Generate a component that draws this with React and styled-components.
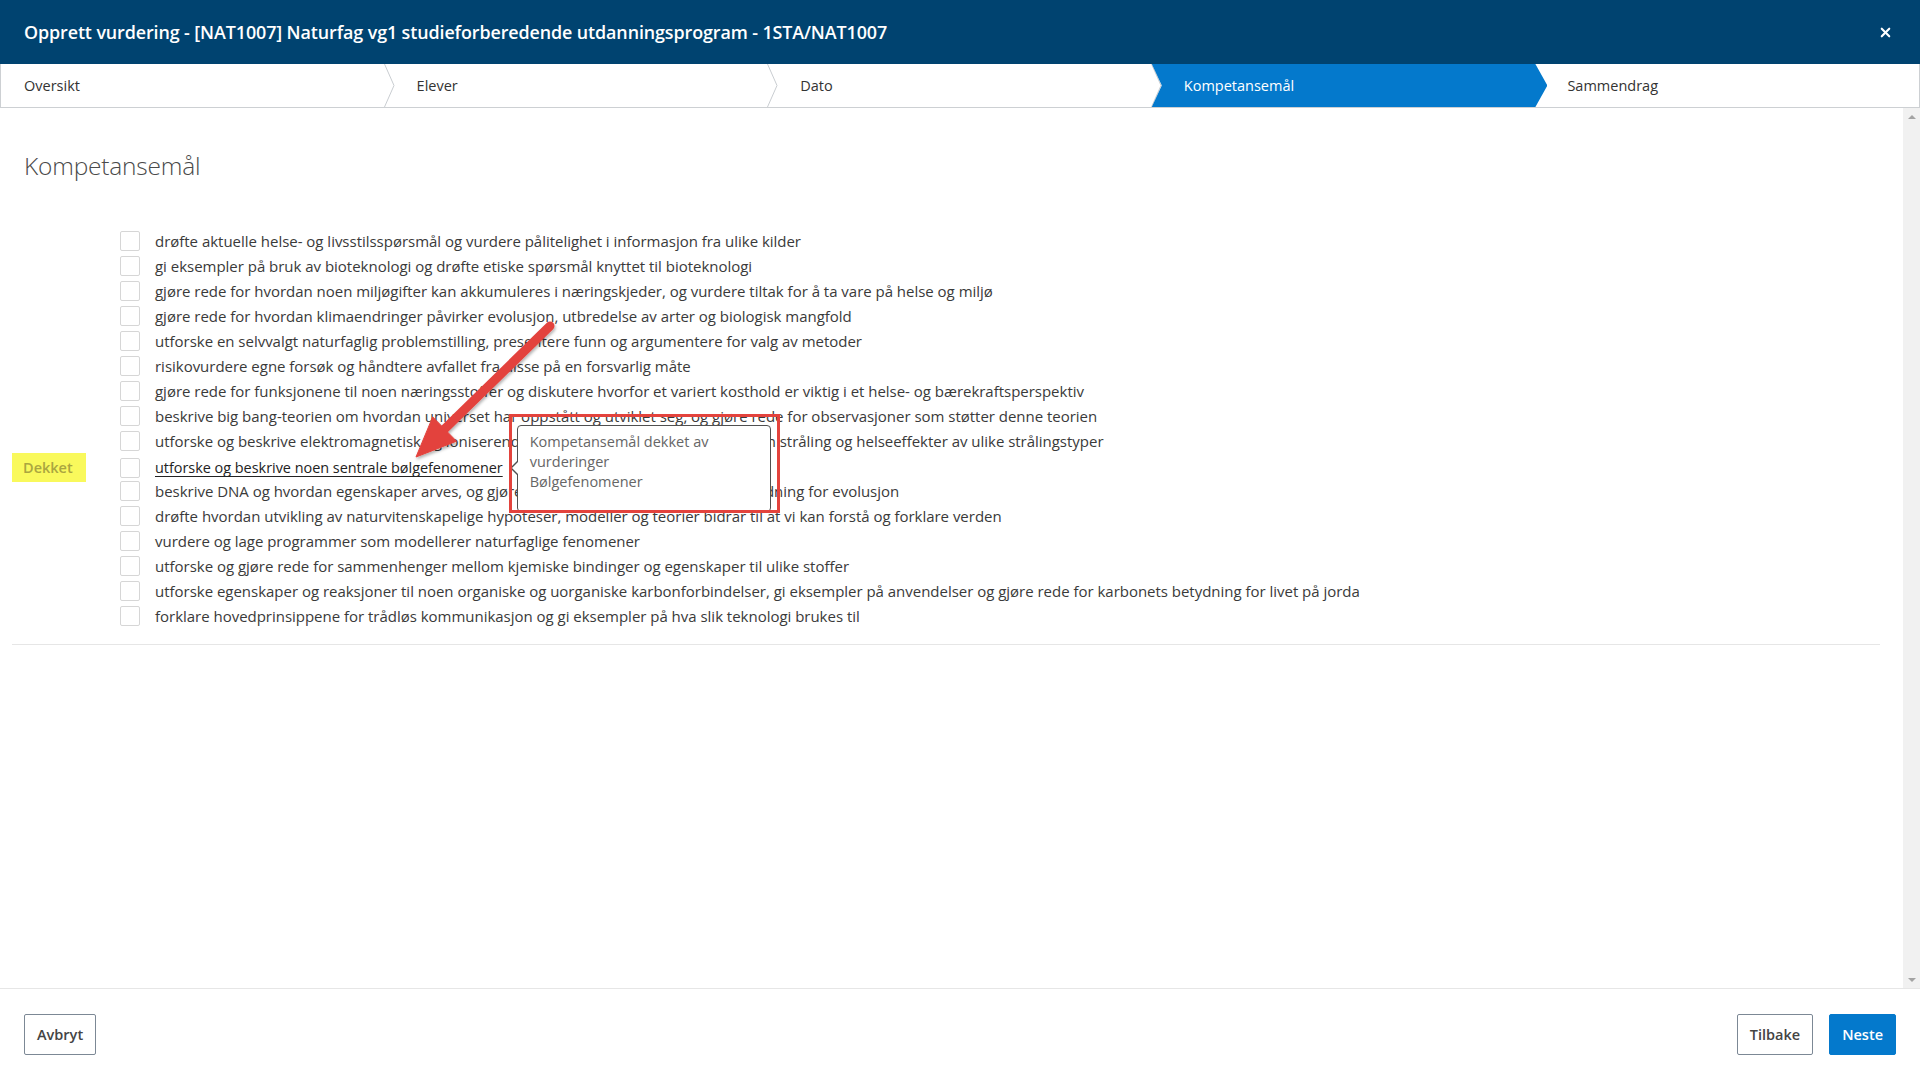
import React from "react";
import styled, { createGlobalStyle, css } from "styled-components";
import { X } from "lucide-react";

const GlobalStyle = createGlobalStyle`
  html, body {
    margin: 0;
    padding: 0;
  }
  body {
    font-family: "Open Sans", "Liberation Sans", sans-serif;
    color: #333;
    background: #fff;
    overflow: hidden;
  }
  * {
    box-sizing: border-box;
  }
`;

const Dialog = styled.div`
  position: relative;
  width: 1920px;
  height: 1080px;
  display: flex;
  flex-direction: column;
  background: #fff;
`;

const Header = styled.header`
  flex: none;
  height: 64px;
  background: #004370;
  color: #fff;
  display: flex;
  align-items: center;
  justify-content: space-between;
  padding: 0 27px 0 24px;
`;

const Title = styled.h1`
  margin: 0;
  font-size: 17.9px;
  font-weight: 600;
  letter-spacing: -0.1px;
`;

const CloseButton = styled.button`
  background: none;
  border: 0;
  padding: 0;
  color: #fff;
  display: flex;
  cursor: pointer;
`;

const Stepper = styled.nav`
  flex: none;
  height: 44px;
  display: grid;
  grid-template-columns: repeat(5, 1fr);
  border: 1px solid #cdd0d3;
  border-top: 0;
`;

const Step = styled.div`
  position: relative;
  display: flex;
  align-items: center;
  padding-left: ${(p) => (p.$first ? 23 : 32)}px;
  font-size: 14.5px;
  color: #333;

  ${(p) =>
    p.$active &&
    css`
      z-index: 1;
      color: #fff;
      &::before {
        content: "";
        position: absolute;
        top: 0;
        bottom: 0;
        left: 0;
        right: -12px;
        z-index: -1;
        background: #0479cc;
        clip-path: polygon(
          0 0,
          calc(100% - 12px) 0,
          100% 50%,
          calc(100% - 12px) 100%,
          0 100%,
          10px 50%
        );
      }
    `}
`;

const Chevron = styled.svg`
  position: absolute;
  top: 0;
  right: -10px;
  width: 11px;
  height: 100%;
  z-index: 1;
`;

const Body = styled.div`
  flex: 1;
  display: flex;
  min-height: 0;
`;

const Content = styled.main`
  flex: 1;
  padding: 42px 23px 0 24px;
`;

const ScrollTrack = styled.div`
  width: 17px;
  background: #f1f1f1;
  display: flex;
  flex-direction: column;
  justify-content: space-between;
  align-items: center;
  padding: 7px 0 6px;
`;

const ScrollArrow = styled.span`
  width: 0;
  height: 0;
  border-left: 4px solid transparent;
  border-right: 4px solid transparent;
  ${(p) =>
    p.$down
      ? css`border-top: 4px solid #a3a3a3;`
      : css`border-bottom: 4px solid #a3a3a3;`}
`;

const Heading = styled.h2`
  margin: 0;
  font-size: 24.5px;
  line-height: 32px;
  font-weight: 300;
  color: #4a4a4a;
  letter-spacing: -0.2px;
`;

const GoalList = styled.ul`
  list-style: none;
  margin: 46px 0 0 -12px;
  padding: 0 0 16px;
  border-bottom: 1px solid #e6e6e6;
`;

const GoalRow = styled.li`
  display: grid;
  grid-template-columns: 93px 20px 1fr;
  column-gap: 15px;
  align-items: center;
  height: 25px;
`;

const CoveredTag = styled.span`
  display: inline-flex;
  align-items: center;
  width: 74px;
  height: 29px;
  padding-left: 11px;
  background: #f9f95c;
  color: #aaa640;
  font-size: 14.5px;
  font-weight: 600;
`;

const Checkbox = styled.span`
  width: 20px;
  height: 20px;
  border: 1px solid #d6d6d6;
  border-radius: 2px;
  background: #fff;
`;

const GoalText = styled.span`
  position: relative;
  justify-self: start;
  font-size: 15px;
  letter-spacing: -0.02px;
  color: #3a3a3a;
  white-space: nowrap;
  ${(p) =>
    p.$covered &&
    css`
      font-size: 14.45px;
      color: #222;
      text-decoration: underline;
      text-underline-offset: 3px;
    `}
`;

const Tooltip = styled.div`
  position: absolute;
  z-index: 2;
  left: calc(100% + 14px);
  top: 50%;
  margin-top: -43px;
  width: 254px;
  height: 87px;
  padding: 6px 12px;
  background: #fff;
  border: 1px solid #505050;
  border-radius: 4px;
  color: #666;
  font-size: 14.5px;
  line-height: 20px;
  letter-spacing: 0;
  white-space: normal;
  text-decoration: none;

  &::before,
  &::after {
    content: "";
    position: absolute;
    top: 50%;
    width: 0;
    height: 0;
    border-top: 7px solid transparent;
    border-bottom: 7px solid transparent;
  }
  &::before {
    left: -8px;
    margin-top: -7px;
    border-right: 7px solid #505050;
  }
  &::after {
    left: -6px;
    margin-top: -7px;
    border-right: 7px solid #fff;
  }
`;

const Footer = styled.footer`
  flex: none;
  height: 92px;
  border-top: 1px solid #e6e6e6;
  display: flex;
  align-items: center;
  justify-content: space-between;
  padding: 0 24px;
`;

const ButtonGroup = styled.div`
  display: flex;
  gap: 16px;
`;

const Button = styled.button`
  height: 41px;
  padding: 0 12px;
  border-radius: 2px;
  font-family: inherit;
  font-size: 14.5px;
  font-weight: 600;
  cursor: pointer;
  border: 1px solid ${(p) => (p.$primary ? "#0479cc" : "#7c8895")};
  background: ${(p) => (p.$primary ? "#0479cc" : "#fff")};
  color: ${(p) => (p.$primary ? "#fff" : "#444")};
`;

const Markup = styled.svg`
  position: absolute;
  top: 0;
  left: 0;
  width: 1920px;
  height: 1080px;
  pointer-events: none;
  z-index: 5;
`;

const steps = ["Oversikt", "Elever", "Dato", "Kompetansemål", "Sammendrag"];
const activeStep = 3;

const goals = [
  "drøfte aktuelle helse- og livsstilsspørsmål og vurdere pålitelighet i informasjon fra ulike kilder",
  "gi eksempler på bruk av bioteknologi og drøfte etiske spørsmål knyttet til bioteknologi",
  "gjøre rede for hvordan noen miljøgifter kan akkumuleres i næringskjeder, og vurdere tiltak for å ta vare på helse og miljø",
  "gjøre rede for hvordan klimaendringer påvirker evolusjon, utbredelse av arter og biologisk mangfold",
  "utforske en selvvalgt naturfaglig problemstilling, presentere funn og argumentere for valg av metoder",
  "risikovurdere egne forsøk og håndtere avfallet fra disse på en forsvarlig måte",
  "gjøre rede for funksjonene til noen næringsstoffer og diskutere hvorfor et variert kosthold er viktig i et helse- og bærekraftsperspektiv",
  "beskrive big bang-teorien om hvordan universet har oppstått og utviklet seg, og gjøre rede for observasjoner som støtter denne teorien",
  "utforske og beskrive elektromagnetisk og ioniserende stråling og diskutere påstander om stråling og helseeffekter av ulike strålingstyper",
  "utforske og beskrive noen sentrale bølgefenomener",
  "beskrive DNA og hvordan egenskaper arves, og gjøre rede for mutasjoner og deres betydning for evolusjon",
  "drøfte hvordan utvikling av naturvitenskapelige hypoteser, modeller og teorier bidrar til at vi kan forstå og forklare verden",
  "vurdere og lage programmer som modellerer naturfaglige fenomener",
  "utforske og gjøre rede for sammenhenger mellom kjemiske bindinger og egenskaper til ulike stoffer",
  "utforske egenskaper og reaksjoner til noen organiske og uorganiske karbonforbindelser, gi eksempler på anvendelser og gjøre rede for karbonets betydning for livet på jorda",
  "forklare hovedprinsippene for trådløs kommunikasjon og gi eksempler på hva slik teknologi brukes til",
];
const coveredIndex = 9;

function StepBar() {
  return (
    <Stepper>
      {steps.map((label, i) => (
        <Step key={label} $first={i === 0} $active={i === activeStep}>
          <span>{label}</span>
          {i < steps.length - 1 && i !== activeStep && (
            <Chevron viewBox="0 0 11 43" preserveAspectRatio="none">
              <polyline
                points="0.5,0 10,21.5 0.5,43"
                fill="#fff"
                stroke="#c9cdd1"
                strokeWidth="1"
              />
            </Chevron>
          )}
        </Step>
      ))}
    </Stepper>
  );
}

// red callout: arrow toward the covered goal plus a frame round its tooltip
function Callout() {
  const tail = [550, 326];
  const tip = [416, 457];
  const dx = tip[0] - tail[0];
  const dy = tip[1] - tail[1];
  const len = Math.hypot(dx, dy);
  const ux = dx / len;
  const uy = dy / len;
  const headLen = 40;
  const headHalf = 17;
  const bx = tip[0] - ux * headLen;
  const by = tip[1] - uy * headLen;
  const head = [
    tip,
    [bx - uy * headHalf, by + ux * headHalf],
    [bx + uy * headHalf, by - ux * headHalf],
  ]
    .map((p) => p.join(","))
    .join(" ");

  return (
    <Markup viewBox="0 0 1920 1080">
      <defs>
        <filter id="callout-shadow" x="-20%" y="-20%" width="140%" height="140%">
          <feDropShadow dx="1" dy="2" stdDeviation="1.5" floodColor="#000" floodOpacity="0.3" />
        </filter>
      </defs>
      <rect x="510.5" y="415.5" width="268" height="96" fill="none" stroke="#e3433d" strokeWidth="3" />
      <g filter="url(#callout-shadow)" fill="#e3433d" stroke="#e3433d">
        <line
          x1={tail[0]}
          y1={tail[1]}
          x2={bx + ux * 4}
          y2={by + uy * 4}
          strokeWidth="9"
          strokeLinecap="round"
        />
        <polygon points={head} strokeWidth="1" strokeLinejoin="round" />
      </g>
    </Markup>
  );
}

export default function App() {
  return (
    <>
      <GlobalStyle />
      <Dialog>
        <Header>
          <Title>
            Opprett vurdering - [NAT1007] Naturfag vg1 studieforberedende
            utdanningsprogram - 1STA/NAT1007
          </Title>
          <CloseButton aria-label="Lukk">
            <X size={15} strokeWidth={3.4} />
          </CloseButton>
        </Header>

        <StepBar />

        <Body>
          <Content>
            <Heading>Kompetansemål</Heading>
            <GoalList>
              {goals.map((goal, i) => (
                <GoalRow key={goal}>
                  <span>{i === coveredIndex && <CoveredTag>Dekket</CoveredTag>}</span>
                  <Checkbox />
                  <GoalText $covered={i === coveredIndex}>
                    {goal}
                    {i === coveredIndex && (
                      <Tooltip>
                        Kompetansemål dekket av vurderinger
                        <br />
                        Bølgefenomener
                      </Tooltip>
                    )}
                  </GoalText>
                </GoalRow>
              ))}
            </GoalList>
          </Content>
          <ScrollTrack>
            <ScrollArrow />
            <ScrollArrow $down />
          </ScrollTrack>
        </Body>

        <Footer>
          <Button>Avbryt</Button>
          <ButtonGroup>
            <Button>Tilbake</Button>
            <Button $primary>Neste</Button>
          </ButtonGroup>
        </Footer>

        <Callout />
      </Dialog>
    </>
  );
}
